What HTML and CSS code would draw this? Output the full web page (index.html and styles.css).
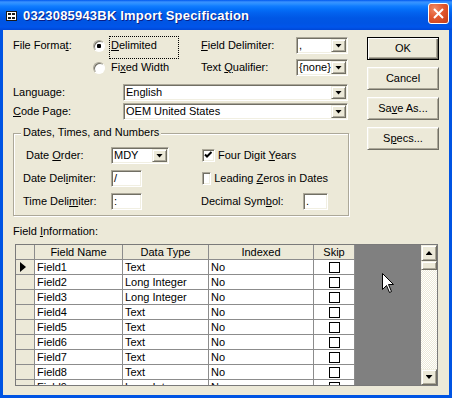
FILE: index.html
```html
<!DOCTYPE html>
<html lang="en">
  <head>
    <meta charset="UTF-8" />
    <title>0323085943BK Import Specification</title>
    <link rel="stylesheet" href="styles.css">
  </head>
  <body>
    <div class="window">
      <!-- Title bar -->
      <div class="titlebar">
        <svg class="title-icon" width="11" height="10" viewBox="0 0 11 10">
          <rect x="0.5" y="0.5" width="10" height="9" fill="#fff" stroke="#1a1a1a" />
          <rect x="2" y="2" width="3" height="2" fill="#1a1a1a" />
          <rect x="2" y="6" width="3" height="2" fill="#1a1a1a" />
          <rect x="6" y="2" width="3" height="2" fill="#1a1a1a" />
          <rect x="6" y="6" width="3" height="2" fill="#1a1a1a" />
        </svg>
        <span class="title-text">0323085943BK Import Specification</span>
        <div class="close-button">
          <svg width="19" height="19" viewBox="0 0 19 19">
            <path d="M5 5 L14 14 M14 5 L5 14" stroke="#fff" stroke-width="2" />
          </svg>
        </div>
      </div>

      <div class="client">
        <div class="top">
          <div class="settings">
            <div class="format-grid">
              <span>File Forma<u>t</u>:</span>
              <span class="option">
                <span class="radio checked"></span>
                <span class="option-label focused"><u>D</u>elimited</span>
              </span>
              <span><u>F</u>ield Delimiter:</span>
              <div class="combo"><span class="combo-text">,</span><span class="drop-button"><span class="arrow-down"></span></span></div>

              <span></span>
              <span class="option">
                <span class="radio"></span>
                <span class="option-label">Fi<u>x</u>ed Width</span>
              </span>
              <span>Text <u>Q</u>ualifier:</span>
              <div class="combo"><span class="combo-text">{none}</span><span class="drop-button"><span class="arrow-down"></span></span></div>
            </div>

            <div class="lang-grid">
              <span>Language:</span>
              <div class="combo"><span class="combo-text">English</span><span class="drop-button"><span class="arrow-down"></span></span></div>
              <span><u>C</u>ode Page:</span>
              <div class="combo"><span class="combo-text">OEM United States</span><span class="drop-button"><span class="arrow-down"></span></span></div>
            </div>

            <div class="group">
              <span class="group-title">Dates, Times, and Numbers</span>
              <div class="group-grid">
                <span class="shifted">Date <u>O</u>rder:</span>
                <div class="combo combo-short"><span class="combo-text">MDY</span><span class="drop-button"><span class="arrow-down"></span></span></div>
                <span class="check-item"><span class="checkbox checked"><svg width="11" height="11" viewBox="0 0 11 11"><path d="M2 4.5 L4 6.5 L8.5 2" stroke="#000" stroke-width="2" fill="none" /></svg></span><span>Four Digit <u>Y</u>ears</span></span>

                <span>Date Del<u>i</u>miter:</span>
                <span class="textbox textbox-short">/</span>
                <span class="check-item"><span class="checkbox"></span><span>Leading <u>Z</u>eros in Dates</span></span>

                <span>Time Deli<u>m</u>iter:</span>
                <span class="textbox textbox-short">:</span>
                <span>Decimal Sym<u>b</u>ol:</span>
                <span class="textbox">.</span>
              </div>
            </div>
          </div>

          <div class="buttons">
            <div class="button default">OK</div>
            <div class="button">Cancel</div>
            <div class="button"><span>Sa<u>v</u>e As...</span></div>
            <div class="button"><span>S<u>p</u>ecs...</span></div>
          </div>
        </div>

        <div class="field-info">Field <u>I</u>nformation:</div>

        <!-- Datasheet -->
        <div class="datasheet">
          <div class="sheet">
            <div class="sheet-row header">
              <span class="cell selector"></span>
              <span class="cell col-name">Field Name</span>
              <span class="cell col-type">Data Type</span>
              <span class="cell col-indexed">Indexed</span>
              <span class="cell col-skip">Skip</span>
            </div>
            <div class="sheet-row">
              <span class="cell selector"><span class="current-arrow"></span></span>
              <span class="cell col-name">Field1</span>
              <span class="cell col-type">Text</span>
              <span class="cell col-indexed">No</span>
              <span class="cell col-skip"><span class="skip-box"></span></span>
            </div>
            <div class="sheet-row">
              <span class="cell selector"></span>
              <span class="cell col-name">Field2</span>
              <span class="cell col-type">Long Integer</span>
              <span class="cell col-indexed">No</span>
              <span class="cell col-skip"><span class="skip-box"></span></span>
            </div>
            <div class="sheet-row">
              <span class="cell selector"></span>
              <span class="cell col-name">Field3</span>
              <span class="cell col-type">Long Integer</span>
              <span class="cell col-indexed">No</span>
              <span class="cell col-skip"><span class="skip-box"></span></span>
            </div>
            <div class="sheet-row">
              <span class="cell selector"></span>
              <span class="cell col-name">Field4</span>
              <span class="cell col-type">Text</span>
              <span class="cell col-indexed">No</span>
              <span class="cell col-skip"><span class="skip-box"></span></span>
            </div>
            <div class="sheet-row">
              <span class="cell selector"></span>
              <span class="cell col-name">Field5</span>
              <span class="cell col-type">Text</span>
              <span class="cell col-indexed">No</span>
              <span class="cell col-skip"><span class="skip-box"></span></span>
            </div>
            <div class="sheet-row">
              <span class="cell selector"></span>
              <span class="cell col-name">Field6</span>
              <span class="cell col-type">Text</span>
              <span class="cell col-indexed">No</span>
              <span class="cell col-skip"><span class="skip-box"></span></span>
            </div>
            <div class="sheet-row">
              <span class="cell selector"></span>
              <span class="cell col-name">Field7</span>
              <span class="cell col-type">Text</span>
              <span class="cell col-indexed">No</span>
              <span class="cell col-skip"><span class="skip-box"></span></span>
            </div>
            <div class="sheet-row">
              <span class="cell selector"></span>
              <span class="cell col-name">Field8</span>
              <span class="cell col-type">Text</span>
              <span class="cell col-indexed">No</span>
              <span class="cell col-skip"><span class="skip-box"></span></span>
            </div>
            <div class="sheet-row">
              <span class="cell selector"></span>
              <span class="cell col-name">Field9</span>
              <span class="cell col-type">Long Integer</span>
              <span class="cell col-indexed">No</span>
              <span class="cell col-skip"><span class="skip-box"></span></span>
            </div>
          </div>
          <div class="sheet-empty"></div>
          <div class="scrollbar">
            <span class="scroll-button"><span class="arrow-up"></span></span>
            <span class="scroll-thumb"></span>
            <span class="scroll-track"></span>
            <span class="scroll-button"><span class="arrow-down"></span></span>
          </div>

          <!-- Mouse pointer -->
          <svg class="pointer" width="13" height="21" viewBox="0 0 13 21">
            <path d="M0.5 0.5 L0.5 16.5 L4.5 12.5 L7.5 19.5 L9.5 18.5 L6.5 11.5 L11.5 11.5 Z" fill="#fff" stroke="#000" />
          </svg>
        </div>
      </div>
    </div>
  </body>
</html>
```

FILE: styles.css
```css
body {
  margin: 0;
  font-family: "Liberation Sans", Arial, sans-serif;
  font-size: 11px;
  line-height: 13px;
  color: #000;
  background: #fff;
}

u {
  text-decoration-thickness: 1px;
  text-underline-offset: 1px;
}

.window {
  width: 452px;
  height: 398px;
  display: flex;
  flex-direction: column;
}

/* Title bar */

.titlebar {
  height: 30px;
  flex: none;
  display: flex;
  align-items: center;
  padding: 0 3px 0 6px;
  background: linear-gradient(
    #0058ee 0px,
    #3a93ff 2px,
    #288eff 4px,
    #127dff 6px,
    #0470f9 9px,
    #0262ee 13px,
    #0057e5 18px,
    #0054e3 23px,
    #0055eb 27px,
    #0047d6 30px
  );
}

.title-icon {
  margin-right: 6px;
  margin-top: 1px;
}

.title-text {
  color: #fff;
  font-weight: bold;
  font-size: 13px;
  letter-spacing: 0.2px;
  text-shadow: 1px 1px #0a1e84;
}

.close-button {
  margin-left: auto;
  align-self: flex-start;
  margin-top: 3px;
  width: 21px;
  height: 21px;
  box-sizing: border-box;
  border: 1px solid #fff;
  border-radius: 3px;
  background: radial-gradient(circle at 30% 25%, #f08a66 0%, #e2582f 45%, #c43c17 100%);
}

.close-button svg {
  display: block;
}

/* Dialog body */

.client {
  flex: 1;
  background: #ece9d8;
  border: 3px solid #0054e3;
  border-top: none;
  padding: 7px 10px 0 10px;
}

.top {
  display: flex;
}

.settings {
  width: 336px;
}

.format-grid {
  display: grid;
  grid-template-columns: 80px 108px 95px 52px;
  grid-template-rows: 17px 17px;
  row-gap: 5px;
  align-items: center;
}

.option {
  display: flex;
  align-items: center;
  align-self: stretch;
}

.option-label {
  margin-left: 4px;
  border: 1px solid transparent;
  padding: 0 1px;
}

.option-label.focused {
  box-sizing: border-box;
  width: 70px;
  height: 23px;
  border: 1px dotted #000;
  padding: 2px 1px 6px;
  align-self: flex-start;
  margin-top: -1px;
  margin-bottom: -6px;
}

.radio {
  width: 12px;
  height: 12px;
  box-sizing: border-box;
  border-radius: 50%;
  border: 1px solid;
  border-color: #aca899 #fff #fff #aca899;
  box-shadow: inset 1px 1px #716f64;
  background: #fff;
}

.radio.checked {
  background: radial-gradient(circle at 50% 50%, #000 0 2px, #fff 2.5px);
}

.lang-grid {
  display: grid;
  grid-template-columns: 110px 225px;
  grid-template-rows: 17px 17px;
  row-gap: 2px;
  margin-top: 8px;
  align-items: center;
}

/* Combo boxes and text boxes */

.combo,
.textbox {
  height: 17px;
  box-sizing: border-box;
  background: #fff;
  border: 1px solid;
  border-color: #aca899 #fff #fff #aca899;
  box-shadow: inset 1px 1px #716f64, inset -1px -1px #f1efe2;
  padding: 1px;
}

.combo {
  display: flex;
}

.combo-text {
  flex: 1;
  line-height: 13px;
  padding-left: 1px;
  white-space: nowrap;
  overflow: hidden;
}

.drop-button {
  width: 15px;
  box-sizing: border-box;
  display: flex;
  align-items: center;
  justify-content: center;
  background: #ece9d8;
  border: 1px solid;
  border-color: #f1efe2 #716f64 #716f64 #f1efe2;
  box-shadow: inset 1px 1px #fff, inset -1px -1px #aca899;
}

.arrow-down,
.arrow-up {
  width: 7px;
  height: 4px;
  background: #000;
}

.arrow-down {
  clip-path: polygon(0 0, 100% 0, 50% 100%);
}

.arrow-up {
  clip-path: polygon(50% 0, 100% 100%, 0 100%);
}

.combo-short {
  width: 58px;
}

.textbox {
  width: 25px;
  line-height: 13px;
  padding-left: 2px;
}

.textbox-short {
  width: 31px;
}

/* Dates group */

.group {
  position: relative;
  margin-top: 13px;
  height: 83px;
  box-sizing: border-box;
  border: 1px solid #aca899;
  box-shadow: inset 1px 1px #fff, 1px 1px #fff;
  padding: 13px 0 0 9px;
}

.group-title {
  position: absolute;
  top: -8px;
  left: 7px;
  padding: 0 2px;
  background: #ece9d8;
}

.group-grid {
  display: grid;
  grid-template-columns: 88px 90px 102px 25px;
  grid-template-rows: repeat(3, 17px);
  row-gap: 6px;
  align-items: center;
}

.shifted {
  margin-left: 3px;
}

.check-item {
  grid-column: span 2;
  display: flex;
  align-items: center;
  white-space: nowrap;
}

.checkbox {
  width: 13px;
  height: 13px;
  box-sizing: border-box;
  margin: 0 3px 0 1px;
  border: 1px solid;
  border-color: #aca899 #fff #fff #aca899;
  box-shadow: inset 1px 1px #716f64, inset -1px -1px #f1efe2;
  background: #fff;
}

.checkbox svg {
  display: block;
}

/* Command buttons */

.buttons {
  margin-left: auto;
  width: 72px;
  display: flex;
  flex-direction: column;
  gap: 7px;
}

.button {
  height: 23px;
  box-sizing: border-box;
  display: flex;
  align-items: center;
  justify-content: center;
  background: #ece9d8;
  border: 1px solid;
  border-color: #fff #716f64 #716f64 #fff;
  box-shadow: inset 1px 1px #f1efe2, inset -1px -1px #aca899;
}

.button.default {
  border-color: #000;
  box-shadow: inset 1px 1px #fff, inset -1px -1px #716f64, inset -2px -2px #aca899;
}

.field-info {
  margin-top: 9px;
}

/* Datasheet */

.datasheet {
  position: relative;
  margin: 6px 0 0 2px;
  width: 423px;
  height: 142px;
  box-sizing: border-box;
  border: 1px solid #7a7a7a;
  display: flex;
  overflow: hidden;
  background: #808080;
}

.sheet {
  width: 339px;
  background: #fff;
}

.sheet-row {
  display: flex;
  height: 15px;
  box-sizing: border-box;
  border-bottom: 1px solid #8c8c8c;
  line-height: 14px;
}

.sheet-row.header {
  background: #ece9d8;
}

.sheet-row.header .cell {
  text-align: center;
  padding-left: 0;
}

.cell {
  box-sizing: border-box;
  border-right: 1px solid #8c8c8c;
  padding-left: 2px;
  white-space: nowrap;
  overflow: hidden;
}

.selector {
  width: 19px;
  background: #ece9d8;
  display: flex;
  align-items: center;
  padding-left: 4px;
}

.current-arrow {
  width: 0;
  height: 0;
  border-left: 6px solid #000;
  border-top: 5px solid transparent;
  border-bottom: 5px solid transparent;
}

.col-name {
  width: 88px;
}

.col-type {
  width: 86px;
}

.col-indexed {
  width: 105px;
}

.col-skip {
  width: 41px;
  display: flex;
  align-items: center;
  justify-content: center;
  padding-left: 0;
}

.skip-box {
  width: 11px;
  height: 11px;
  box-sizing: border-box;
  border: 1px solid #000;
  background: #fff;
}

.sheet-empty {
  width: 66px;
  background: #808080;
}

.scrollbar {
  width: 16px;
  display: flex;
  flex-direction: column;
  background: repeating-conic-gradient(#ece9d8 0 25%, #fff 0 50%) 0 0 / 2px 2px;
}

.scroll-button,
.scroll-thumb {
  box-sizing: border-box;
  background: #ece9d8;
  border: 1px solid;
  border-color: #f1efe2 #716f64 #716f64 #f1efe2;
  box-shadow: inset 1px 1px #fff, inset -1px -1px #aca899;
}

.scroll-button {
  height: 16px;
  display: flex;
  align-items: center;
  justify-content: center;
}

.scroll-thumb {
  height: 9px;
}

.scroll-track {
  flex: 1;
}

.pointer {
  position: absolute;
  left: 366px;
  top: 28px;
}
```
